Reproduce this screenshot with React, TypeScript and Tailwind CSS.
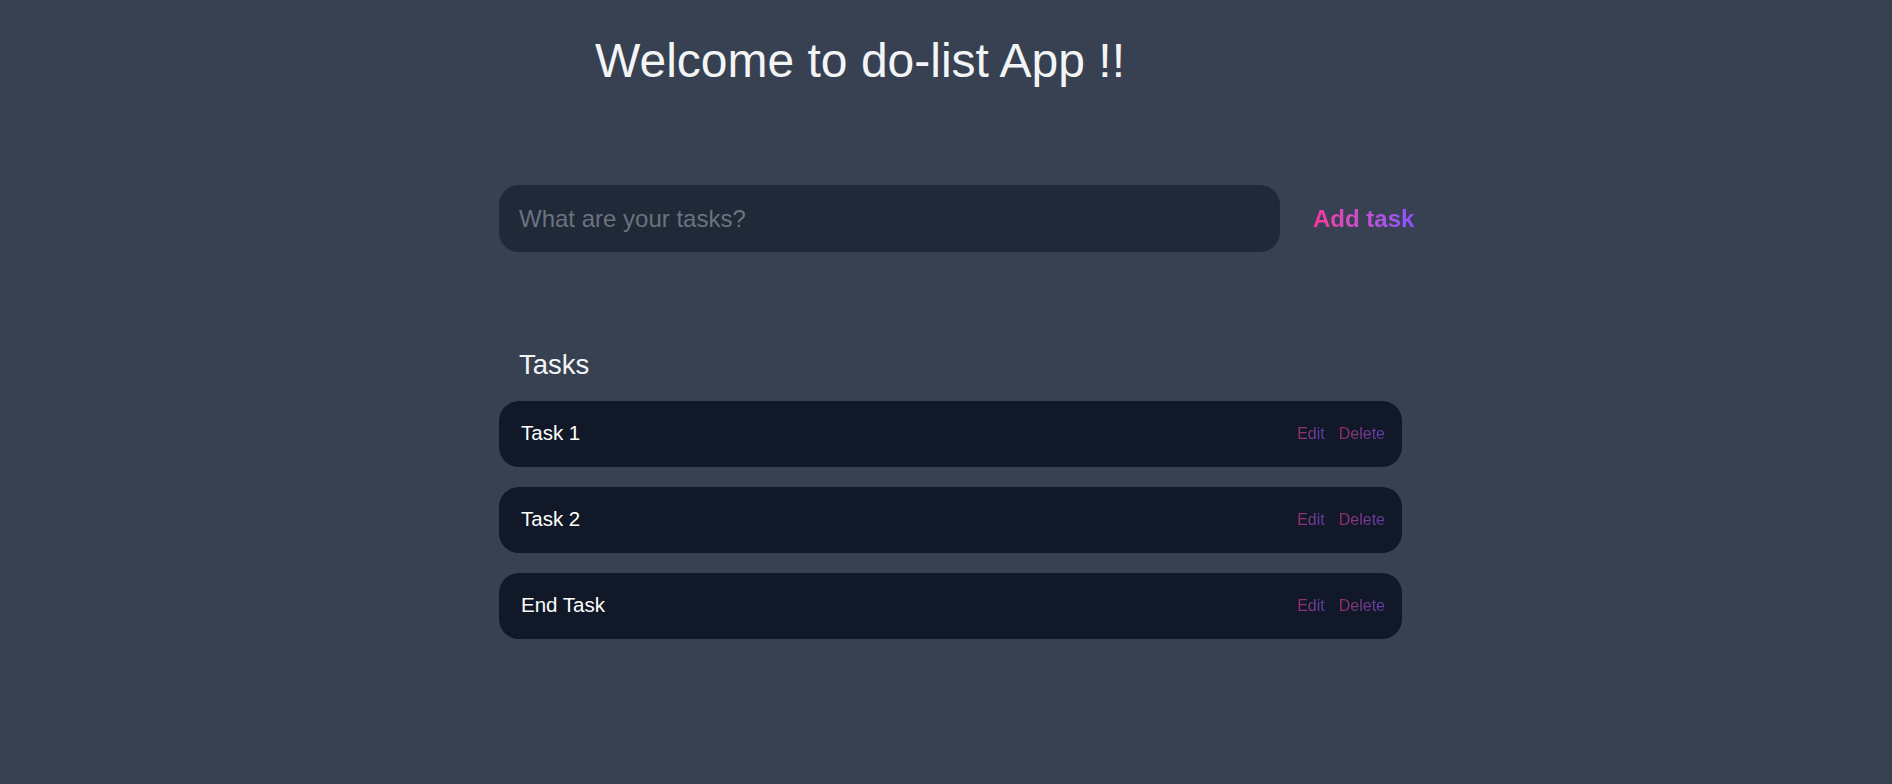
import { useState } from "react";

const initialTasks = ["Task 1", "Task 2", "End Task"];

export default function App() {
  const [tasks] = useState<string[]>(initialTasks);
  const [value, setValue] = useState("");

  return (
    <div className="min-h-[784px] w-full bg-[#374151] font-['Liberation_Sans',Arial,sans-serif] text-gray-100">
      <div className="mx-auto w-[934px] pl-[20px] pt-[37px]">
        <h1 className="ml-[96px] text-5xl leading-none text-[#f3f4f6]">Welcome to do-list App !!</h1>

        <div className="mt-[100px] flex items-center">
          <input
            value={value}
            onChange={(e) => setValue(e.target.value)}
            placeholder="What are your tasks?"
            className="h-[67px] w-[781px] shrink-0 rounded-[20px] bg-[#1f2937] px-[20px] text-2xl text-gray-100 outline-none placeholder:text-[#6b7280]"
          />
          <button className="ml-[33px] shrink-0 whitespace-nowrap bg-gradient-to-r from-pink-500 to-violet-500 bg-clip-text text-2xl font-bold text-transparent">
            Add task
          </button>
        </div>

        <h2 className="mt-[99px] pl-[20px] text-[27.5px] leading-none text-[#f3f4f6]">Tasks</h2>

        <div className="mt-[22px] flex w-[903px] flex-col gap-[20px]">
          {tasks.map((t) => (
            <div key={t} className="flex h-[66px] items-center justify-between rounded-[20px] bg-[#111827] pl-[22px] pr-[17px]">
              <span className="text-[20.5px] text-white">{t}</span>
              <div className="flex gap-[14px] opacity-60">
                <button className="bg-gradient-to-r from-pink-500 to-violet-500 bg-clip-text text-base text-transparent">Edit</button>
                <button className="bg-gradient-to-r from-pink-500 to-violet-500 bg-clip-text text-base text-transparent">Delete</button>
              </div>
            </div>
          ))}
        </div>
      </div>
    </div>
  );
}
